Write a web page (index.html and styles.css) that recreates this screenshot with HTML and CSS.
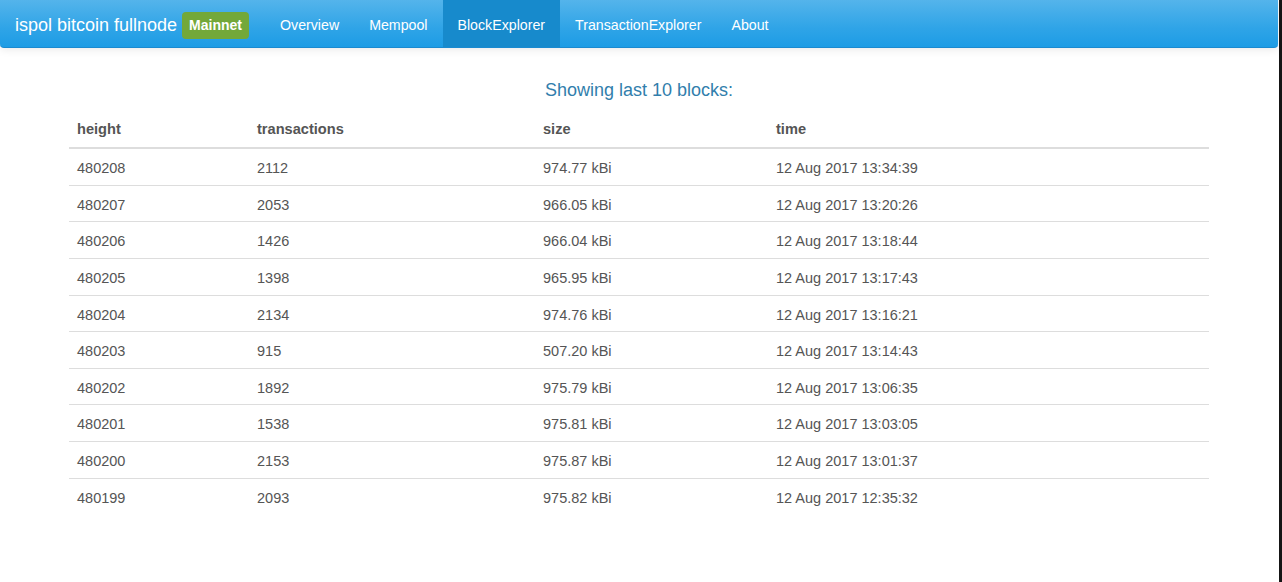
FILE: index.html
```html
<!DOCTYPE html>
<html lang="en">
<head>
<meta charset="utf-8">
<title>ispol bitcoin fullnode</title>
<link rel="stylesheet" href="styles.css">
</head>
<body>
<div class="page">
  <nav class="navbar">
    <a class="brand" href="#">ispol bitcoin fullnode <span class="net">Mainnet</span></a>
    <ul class="nav">
      <li><a href="#">Overview</a></li>
      <li><a href="#">Mempool</a></li>
      <li class="active"><a href="#">BlockExplorer</a></li>
      <li><a href="#">TransactionExplorer</a></li>
      <li><a href="#">About</a></li>
    </ul>
  </nav>
  <main class="container">
    <h3 class="title">Showing last 10 blocks:</h3>
    <table class="blocks">
      <colgroup>
        <col class="c-height"><col class="c-tx"><col class="c-size"><col class="c-time">
      </colgroup>
      <thead>
        <tr><th>height</th><th>transactions</th><th>size</th><th>time</th></tr>
      </thead>
      <tbody>
        <tr><td>480208</td><td>2112</td><td>974.77 kBi</td><td>12 Aug 2017 13:34:39</td></tr>
        <tr><td>480207</td><td>2053</td><td>966.05 kBi</td><td>12 Aug 2017 13:20:26</td></tr>
        <tr><td>480206</td><td>1426</td><td>966.04 kBi</td><td>12 Aug 2017 13:18:44</td></tr>
        <tr><td>480205</td><td>1398</td><td>965.95 kBi</td><td>12 Aug 2017 13:17:43</td></tr>
        <tr><td>480204</td><td>2134</td><td>974.76 kBi</td><td>12 Aug 2017 13:16:21</td></tr>
        <tr><td>480203</td><td>915</td><td>507.20 kBi</td><td>12 Aug 2017 13:14:43</td></tr>
        <tr><td>480202</td><td>1892</td><td>975.79 kBi</td><td>12 Aug 2017 13:06:35</td></tr>
        <tr><td>480201</td><td>1538</td><td>975.81 kBi</td><td>12 Aug 2017 13:03:05</td></tr>
        <tr><td>480200</td><td>2153</td><td>975.87 kBi</td><td>12 Aug 2017 13:01:37</td></tr>
        <tr><td>480199</td><td>2093</td><td>975.82 kBi</td><td>12 Aug 2017 12:35:32</td></tr>
      </tbody>
    </table>
  </main>
</div>
</body>
</html>
```
FILE: styles.css
```css
html {
  background: #151515;
  height: 100%;
}
body {
  margin: 0;
  height: 100%;
  font-family: "Liberation Sans", Arial, sans-serif;
  font-size: 14px;
  line-height: 20px;
  color: #555555;
}
.page {
  width: 1279px;
  min-height: 100%;
  background: #ffffff;
}
.navbar {
  display: flex;
  align-items: stretch;
  height: 48px;
  box-sizing: border-box;
  background: linear-gradient(#54b4eb, #2fa4e7 60%, #1d9ce5);
  border-bottom: 1px solid #1a8ad0;
  border-radius: 0 0 4px 4px;
  box-shadow: 0 1px 10px rgba(0, 0, 0, 0.1);
  width: 1278px;
}
.brand {
  display: flex;
  align-items: center;
  padding: 3px 16px 0 15px;
  font-size: 18px;
  color: #ffffff;
  text-decoration: none;
}
.net {
  margin-left: 5px;
  background: #73a839;
  color: #ffffff;
  font-size: 14px;
  font-weight: bold;
  line-height: 17px;
  padding: 5px 7px;
  border-radius: 4px;
}
.nav {
  display: flex;
  list-style: none;
  margin: 0;
  padding: 0;
}
.nav li a {
  display: block;
  height: 100%;
  box-sizing: border-box;
  padding: 15px 15px 0;
  color: #ffffff;
  text-decoration: none;
  font-size: 14.2px;
  line-height: 20px;
}
.nav li.active a {
  background: #178acc;
}
.container {
  width: 1140px;
  margin: 0 0 0 69px;
}
.title {
  margin: 31px 0 10px;
  text-align: center;
  font-size: 18px;
  font-weight: normal;
  line-height: 22px;
  color: #317eac;
}
.blocks {
  width: 100%;
  border-collapse: collapse;
}
.c-height { width: 180px; }
.c-tx { width: 286px; }
.c-size { width: 233px; }
.blocks th {
  text-align: left;
  font-weight: bold;
  font-size: 14.6px;
  padding: 8px;
  border-bottom: 2px solid #dddddd;
}
.blocks td {
  font-size: 14.5px;
  line-height: 19.625px;
  padding: 10px 8px 6px;
  border-top: 1px solid #dddddd;
}
.blocks tbody tr:first-child td {
  border-top: 0;
}
```
